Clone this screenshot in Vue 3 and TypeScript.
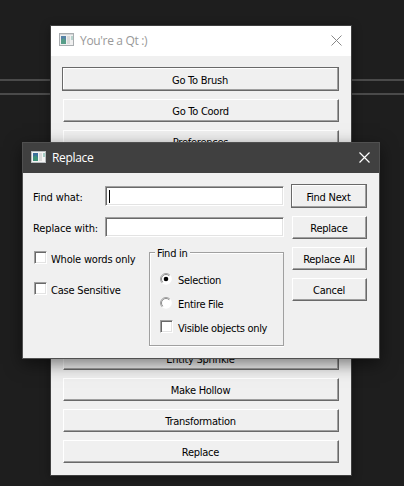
<script setup lang="ts">
import { ref } from 'vue'

interface ToolButton {
  label: string
  focused?: boolean
}

const topTools: ToolButton[] = [
  { label: 'Go To Brush', focused: true },
  { label: 'Go To Coord' },
  { label: 'Preferences' },
]
const bottomTools: ToolButton[] = [
  { label: 'Entity Sprinkle' },
  { label: 'Make Hollow' },
  { label: 'Transformation' },
  { label: 'Replace' },
]
const actions: ToolButton[] = [
  { label: 'Find Next', focused: true },
  { label: 'Replace' },
  { label: 'Replace All' },
  { label: 'Cancel' },
]

const wholeWords = ref<boolean>(false)
const caseSensitive = ref<boolean>(false)
const visibleOnly = ref<boolean>(false)
const scope = ref<'selection' | 'file'>('selection')
</script>

<template>
  <div class="desktop">
    <div class="rail rail-upper"></div>
    <div class="rail rail-lower"></div>

    <section class="window main-window">
      <header class="titlebar">
        <svg class="app-icon" width="16" height="14" viewBox="0 0 16 14">
          <rect width="15" height="13" fill="#a9adb0" />
          <rect x="1" y="1" width="13" height="1" fill="#d5d7d8" />
          <rect x="1" y="2" width="13" height="10" fill="#f0f0f0" />
          <rect x="2" y="3" width="5" height="8" fill="#5682a6" />
          <path d="M2 7L5 5L7 8V11H2Z" fill="#579d88" />
          <rect x="8" y="3" width="3" height="8" fill="#dadada" />
          <rect x="12" y="3" width="2" height="4" fill="#b7d3cd" />
        </svg>
        <span class="title">You're a Qt :)</span>
        <svg class="close" width="11" height="11" viewBox="0 0 11 11">
          <path d="M.5 .5L10.5 10.5M10.5 .5L.5 10.5" />
        </svg>
      </header>
      <div class="tool-list">
        <button v-for="t in topTools" :key="t.label" class="btn" :class="{ focused: t.focused }">
          <span class="txt">{{ t.label }}</span>
        </button>
      </div>
      <div class="tool-list lower-list">
        <button v-for="t in bottomTools" :key="t.label" class="btn">
          <span class="txt">{{ t.label }}</span>
        </button>
      </div>
    </section>

    <section class="window dialog">
      <header class="titlebar">
        <svg class="app-icon" width="16" height="14" viewBox="0 0 16 14">
          <rect width="15" height="12" fill="#b9bdc0" />
          <rect x="1" y="1" width="13" height="10" fill="#f4f4f4" />
          <rect x="2" y="2" width="5" height="8" fill="#3c6f9c" />
          <path d="M2 6L5 4L7 7V10H2Z" fill="#3f927a" />
          <rect x="8" y="2" width="3" height="8" fill="#dadada" />
          <rect x="12" y="2" width="2" height="4" fill="#a5cdc4" />
        </svg>
        <span class="title">Replace</span>
        <svg class="close" width="11" height="11" viewBox="0 0 11 11">
          <path d="M.5 .5L10.5 10.5M10.5 .5L.5 10.5" />
        </svg>
      </header>
      <div class="dialog-body">
        <div class="form">
          <div class="field">
            <label class="txt">Find what:</label>
            <div class="input"><i class="caret"></i></div>
          </div>
          <div class="field">
            <label class="txt">Replace with:</label>
            <div class="input"></div>
          </div>
          <div class="options">
            <div class="checks">
              <label class="option" @click="wholeWords = !wholeWords">
                <span class="check" :class="{ on: wholeWords }"></span>
                <span class="txt">Whole words only</span>
              </label>
              <label class="option" @click="caseSensitive = !caseSensitive">
                <span class="check" :class="{ on: caseSensitive }"></span>
                <span class="txt">Case Sensitive</span>
              </label>
            </div>
            <div class="group">
              <span class="legend txt">Find in</span>
              <label class="option" @click="scope = 'selection'">
                <svg class="radio" width="12" height="12" viewBox="0 0 12 12">
                  <circle cx="6" cy="6" r="5.8" fill="#fff" />
                  <path d="M2.1 9.9A5.5 5.5 0 0 1 9.9 2.1" class="rim" />
                  <path d="M2.8 9.2A4.5 4.5 0 0 1 9.2 2.8" class="rim-inner" />
                  <circle v-if="scope === 'selection'" cx="6" cy="6" r="2.3" fill="#000" />
                </svg>
                <span class="txt">Selection</span>
              </label>
              <label class="option" @click="scope = 'file'">
                <svg class="radio" width="12" height="12" viewBox="0 0 12 12">
                  <circle cx="6" cy="6" r="5.8" fill="#fff" />
                  <path d="M2.1 9.9A5.5 5.5 0 0 1 9.9 2.1" class="rim" />
                  <path d="M2.8 9.2A4.5 4.5 0 0 1 9.2 2.8" class="rim-inner" />
                  <circle v-if="scope === 'file'" cx="6" cy="6" r="2.3" fill="#000" />
                </svg>
                <span class="txt">Entire File</span>
              </label>
              <label class="option" @click="visibleOnly = !visibleOnly">
                <span class="check" :class="{ on: visibleOnly }"></span>
                <span class="txt">Visible objects only</span>
              </label>
            </div>
          </div>
        </div>
        <div class="actions">
          <button v-for="a in actions" :key="a.label" class="btn" :class="{ focused: a.focused }">
            <span class="txt">{{ a.label }}</span>
          </button>
        </div>
      </div>
    </section>
  </div>
</template>

<style>
body {
  background: #1e1e1e;
  overflow: hidden;
}
</style>

<style scoped>
* {
  box-sizing: border-box;
}
.desktop {
  position: relative;
  width: 404px;
  height: 486px;
  overflow: hidden;
  background: #1e1e1e;
  font-family: 'DejaVu Sans Condensed', 'DejaVu Sans', sans-serif;
  font-stretch: condensed;
  font-size: 11px;
  line-height: 13px;
  color: #000;
}
.rail {
  position: absolute;
  left: 0;
  width: 100%;
  height: 2px;
  background: #4a4a4a;
}
.rail-upper {
  top: 79px;
}
.rail-lower {
  top: 93px;
}
.window {
  position: absolute;
  background: #f0f0f0;
  border: 1px solid #3f3f3f;
}
.main-window {
  left: 50px;
  top: 25px;
  width: 302px;
  height: 451px;
  box-shadow: 0 2px 9px rgba(0, 0, 0, 0.35);
}
.dialog {
  left: 22px;
  top: 142px;
  width: 358px;
  height: 217px;
  border-color: #505050;
  box-shadow: 0 5px 16px rgba(0, 0, 0, 0.5);
}
.titlebar {
  display: flex;
  align-items: flex-start;
  height: 30px;
  padding: 7px 9px 0 8px;
  background: #fff;
  color: #999;
  font-family: 'Open Sans', 'Noto Sans', sans-serif;
  font-stretch: normal;
  font-size: 12px;
  line-height: 16px;
}
.dialog .titlebar {
  padding-top: 8px;
  background: #404040;
  color: #fff;
}
.title {
  flex: 1;
  padding-left: 5px;
  letter-spacing: -0.33px;
}
.dialog .title {
  margin-top: -1px;
}
.close {
  margin-top: 2px;
  fill: none;
  stroke: #888;
  stroke-width: 1;
}
.dialog .close {
  margin-top: 1px;
  stroke: #fff;
  stroke-width: 1.2;
}
.btn {
  display: flex;
  align-items: center;
  justify-content: center;
  height: 23px;
  padding: 0;
  border: 1px solid;
  border-color: #fff #696969 #696969 #fff;
  background: #f0f0f0;
  box-shadow: inset -1px -1px #a0a0a0;
  font: inherit;
  color: inherit;
}
.btn.focused {
  height: 24px;
  margin: -1px 0 0 -1px;
  border-color: #696969;
  box-shadow: inset -1px -1px #a0a0a0, inset 1px 1px #fff;
}
.btn .txt {
  padding: 2px 1px 0 0;
}
.txt {
  white-space: nowrap;
  letter-spacing: -0.26px;
}
.tool-list {
  display: flex;
  flex-direction: column;
  gap: 8px;
  padding: 12px 12px 0;
}
.lower-list {
  margin-top: 182px;
}
.dialog-body {
  display: flex;
  padding: 12px 12px 0 10px;
}
.form {
  display: flex;
  flex-direction: column;
  width: 251px;
  padding-top: 1px;
}
.field {
  display: flex;
  align-items: center;
  height: 20px;
  margin-bottom: 11px;
}
.field .txt {
  width: 72px;
  padding-top: 3px;
  letter-spacing: -0.12px;
}
.input {
  flex: 1;
  height: 20px;
  padding: 2px;
  background: #fff;
  border: 1px solid;
  border-color: #a0a0a0 #fff #fff #a0a0a0;
  box-shadow: inset 1px 1px #696969, inset -1px -1px #e3e3e3;
}
.caret {
  display: block;
  width: 1px;
  height: 13px;
  margin: 1px 0 0 1px;
  background: #000;
}
.options {
  display: flex;
  justify-content: space-between;
  padding-top: 3px;
}
.checks {
  display: flex;
  flex-direction: column;
  gap: 18px;
  padding-left: 1px;
}
.option {
  display: flex;
  align-items: center;
  gap: 5px;
  height: 13px;
}
.checks .option {
  gap: 4px;
}
.checks .txt {
  padding-top: 4px;
  letter-spacing: -0.2px;
}
.group .option .txt {
  padding-top: 2px;
  letter-spacing: -0.3px;
}
.check {
  position: relative;
  width: 13px;
  height: 13px;
  background: #fff;
  border: 1px solid;
  border-color: #a0a0a0 #fff #fff #a0a0a0;
  box-shadow: inset 1px 1px #696969, inset -1px -1px #e3e3e3;
}
.group .check {
  margin-top: -2px;
}
.check.on::after {
  content: '';
  position: absolute;
  left: 3px;
  top: 3px;
  width: 5px;
  height: 3px;
  border: solid #000;
  border-width: 0 0 1px 1px;
  transform: rotate(-45deg);
}
.group {
  position: relative;
  display: flex;
  flex-direction: column;
  gap: 11px;
  width: 135px;
  height: 94px;
  margin-top: 1px;
  padding: 20px 0 0 10px;
  border: 1px solid #a0a0a0;
  box-shadow: 0 1px #fff, inset 1px 1px #fff;
}
.group .legend {
  position: absolute;
  left: 5px;
  top: -6px;
  padding: 0 2px;
  background: #f0f0f0;
}
.radio {
  margin: -1px 1px 0 0;
}
.rim {
  fill: none;
  stroke: #a0a0a0;
}
.rim-inner {
  fill: none;
  stroke: #808080;
  stroke-width: 0.9;
}
.actions {
  flex: 1;
  display: flex;
  flex-direction: column;
  gap: 8px;
  margin-left: 8px;
}
</style>
